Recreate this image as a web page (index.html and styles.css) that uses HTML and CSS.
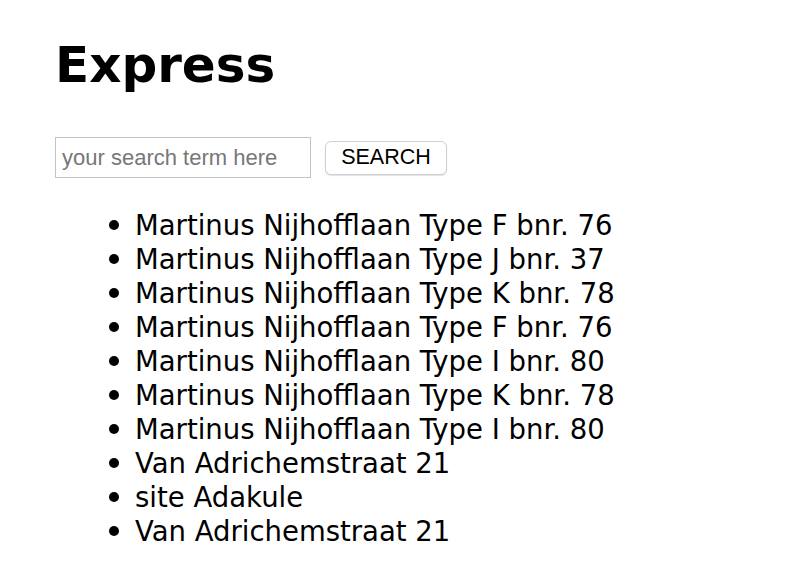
FILE: index.html
```html
<!DOCTYPE html>
<html>
<head>
<meta charset="utf-8">
<title>Express</title>
<link rel="stylesheet" href="styles.css">
</head>
<body>
<h1 class="title">Express</h1>
<form class="search">
  <input class="search-input" type="text" placeholder="your search term here">
  <button class="search-btn" type="button">SEARCH</button>
</form>
<ul class="results">
  <li class="result">Martinus Nijhofflaan Type F bnr. 76</li>
  <li class="result">Martinus Nijhofflaan Type J bnr. 37</li>
  <li class="result">Martinus Nijhofflaan Type K bnr. 78</li>
  <li class="result">Martinus Nijhofflaan Type F bnr. 76</li>
  <li class="result">Martinus Nijhofflaan Type I bnr. 80</li>
  <li class="result">Martinus Nijhofflaan Type K bnr. 78</li>
  <li class="result">Martinus Nijhofflaan Type I bnr. 80</li>
  <li class="result">Van Adrichemstraat 21</li>
  <li class="result">site Adakule</li>
  <li class="result">Van Adrichemstraat 21</li>
</ul>
</body>
</html>
```

FILE: styles.css
```css
html, body {
  margin: 0;
  background: #fff;
}
body {
  padding: 27px 0 0 55px;
  font-family: "DejaVu Sans", sans-serif;
  color: #000;
}
.title {
  font-size: 50px;
  font-weight: bold;
  margin: 0;
  line-height: 76px;
}
.search {
  display: flex;
  align-items: center;
  gap: 14px;
  margin-top: 34px;
}
.search-input {
  box-sizing: border-box;
  width: 256px;
  height: 41px;
  border: 1px solid #c4c4c4;
  padding: 0 6px;
  font-family: "Liberation Sans", Arial, sans-serif;
  font-size: 22px;
  margin: 0;
  outline: none;
}
.search-input::placeholder {
  color: #777;
}
.search-btn {
  box-sizing: border-box;
  width: 122px;
  height: 34px;
  border: 1px solid #d0d0d0;
  border-radius: 6px;
  background: #fff;
  box-shadow: 0 1px 1px rgba(0,0,0,0.12);
  font-family: "Liberation Sans", Arial, sans-serif;
  font-size: 21.5px;
  color: #000;
  margin: 0;
  padding: 0;
}
.results {
  list-style: none;
  margin: 30px 0 0 0;
  padding-left: 80px;
  font-size: 27.5px;
  line-height: 34px;
}
.result {
  display: flex;
  align-items: center;
}
.result::before {
  content: "";
  flex: none;
  width: 10px;
  height: 10px;
  border-radius: 50%;
  background: #000;
  margin-left: -26px;
  margin-right: 16px;
}
```
